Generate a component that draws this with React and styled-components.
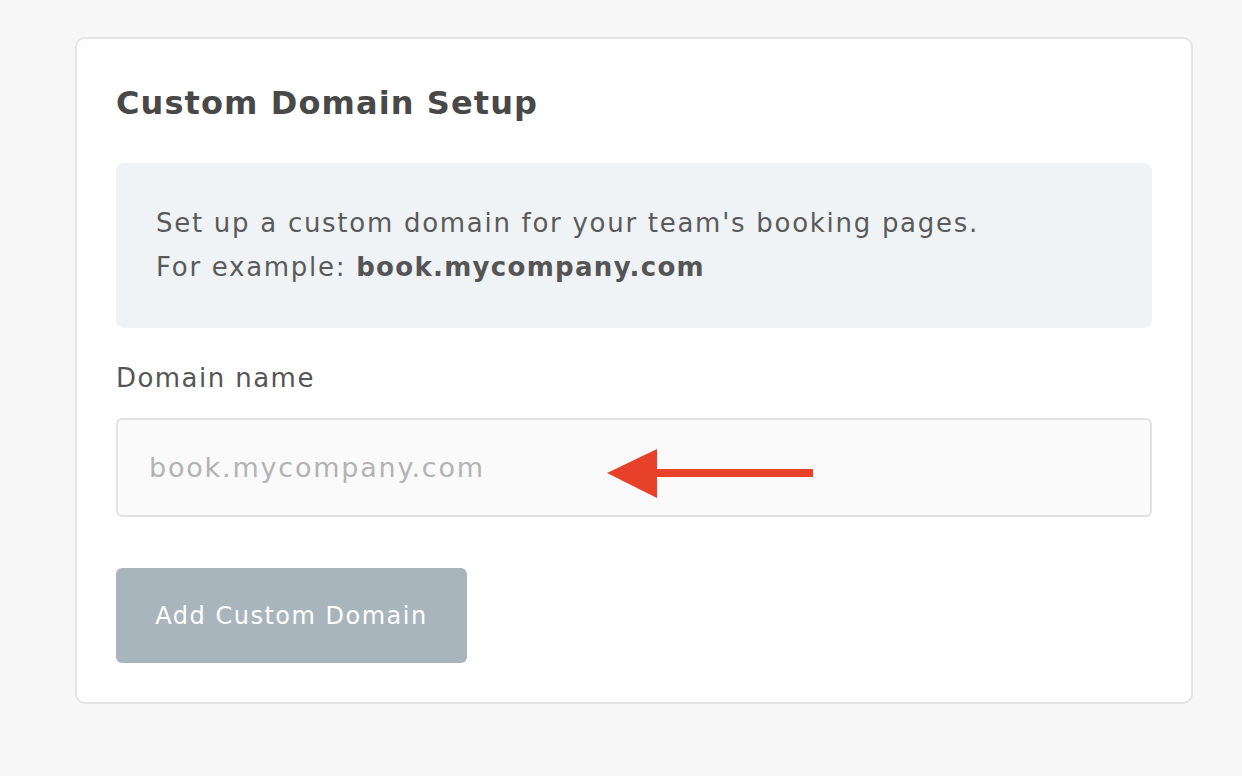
import React from "react";
import styled, { createGlobalStyle } from "styled-components";

const Global = createGlobalStyle`
  html, body { margin: 0; padding: 0; background: #f7f7f7; }
  body { font-family: "DejaVu Sans", "Noto Sans", sans-serif; }
  * { box-sizing: border-box; }
`;

const Page = styled.div`
  padding: 37px 0 0 75px;
  min-height: 776px;
`;

const Card = styled.section`
  width: 1118px;
  height: 667px;
  background: #fff;
  border: 2px solid #e4e4e4;
  border-radius: 10px;
  padding: 44px 39px 39px 39px;
  display: flex;
  flex-direction: column;
`;

const Title = styled.h2`
  margin: 0;
  font-size: 32px;
  line-height: 40px;
  font-weight: 600;
  color: #484848;
  letter-spacing: 1.1px;
`;

const InfoBox = styled.div`
  margin-top: 40px;
  height: 165px;
  background: #eff3f6;
  border-radius: 8px;
  padding: 38px 40px;
  color: #5a5a5a;
  font-size: 26px;
  line-height: 44px;
  letter-spacing: 1.72px;
  white-space: nowrap;
`;

const Strong = styled.strong`
  font-weight: 700;
  color: #555;
  letter-spacing: 1.3px;
`;

const Label = styled.label`
  display: block;
  margin-top: 35px;
  font-size: 26px;
  line-height: 30px;
  color: #555;
  letter-spacing: 1.45px;
`;

const Field = styled.div`
  position: relative;
  margin-top: 25px;
`;

const Input = styled.input`
  width: 100%;
  height: 99px;
  border: 2px solid #e2e2e2;
  border-radius: 6px;
  background: #fafafa;
  padding: 0 31px;
  font-family: inherit;
  font-size: 27px;
  letter-spacing: 1.8px;
  color: #444;
  outline: none;
  &::placeholder { color: #b3b3b3; }
`;

const Arrow = styled.svg`
  position: absolute;
  left: 490px;
  top: 30px;
  pointer-events: none;
`;

const Button = styled.button`
  margin-top: 51px;
  width: 351px;
  height: 95px;
  border: none;
  border-radius: 6px;
  background: #a9b5bd;
  color: #fff;
  font-family: inherit;
  font-size: 24px;
  letter-spacing: 1.5px;
  font-weight: 500;
  padding: 0;
  cursor: not-allowed;
`;

export default function App() {
  return (
    <>
      <Global />
      <Page>
        <Card>
          <Title>Custom Domain Setup</Title>
          <InfoBox>
            Set up a custom domain for your team's booking pages.
            <br />
            For example: <Strong>book.mycompany.com</Strong>
          </InfoBox>
          <Label htmlFor="domain">Domain name</Label>
          <Field>
            <Input id="domain" placeholder="book.mycompany.com" />
            <Arrow width="210" height="52" viewBox="0 0 210 52">
              <polygon points="1,25 51,1 51,50" fill="#e8412a" />
              <rect x="48" y="21" width="159" height="8" fill="#e8412a" />
            </Arrow>
          </Field>
          <Button disabled>Add Custom Domain</Button>
        </Card>
      </Page>
    </>
  );
}
